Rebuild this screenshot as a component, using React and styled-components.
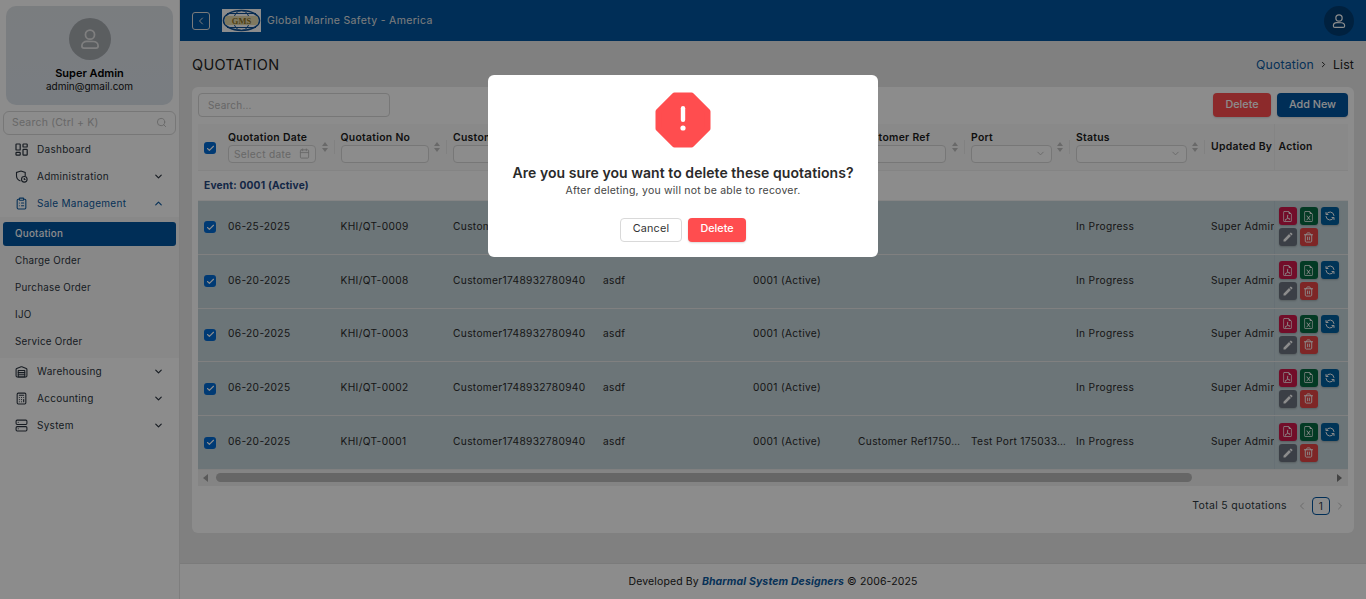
import React from "react";
import styled, { createGlobalStyle } from "styled-components";
import {
  LuChevronLeft,
  LuChevronRight,
  LuChevronDown,
  LuChevronUp,
  LuSearch,
  LuCalendar,
  LuClipboardList,
  LuWarehouse,
  LuCalculator,
  LuServer,
  LuTrash2,
  LuCheck,
} from "react-icons/lu";
import { BsFileEarmarkPdf, BsFileEarmarkExcel } from "react-icons/bs";
import { TbRefresh } from "react-icons/tb";
import { MdEdit } from "react-icons/md";

const font = `Inter, "Noto Sans", "Liberation Sans", sans-serif`;

const GlobalStyle = createGlobalStyle`
  html, body {
    margin: 0;
    padding: 0;
    height: 100%;
    overflow: hidden;
    background: #ffffff;
    font-family: ${font};
    color: #2a2a2a;
  }
  * { box-sizing: border-box; }
`;

const Layout = styled.div`
  display: flex;
  height: 100vh;
`;

const Sidebar = styled.aside`
  width: 180px;
  flex: none;
  background: #fff;
  border-right: 1px solid #e6e6e6;
  padding: 6px 0 0;
`;
const Profile = styled.div`
  margin: 0 6px 0 6px;
  height: 99px;
  border-radius: 10px;
  background: linear-gradient(180deg, #dfe3e8, #dde4ec);
  display: flex;
  flex-direction: column;
  align-items: center;
  padding-top: 12px;
`;
const Avatar = styled.div`
  width: 42px;
  height: 42px;
  border-radius: 50%;
  background: #a6abb0;
  color: #e8e8e8;
  display: flex;
  align-items: center;
  justify-content: center;
`;
const ProfileName = styled.div`
  margin-top: 6px;
  font-size: 11px;
  font-weight: 600;
  line-height: 14px;
  color: #000;
`;
const ProfileMail = styled.div`
  font-size: 10px;
  line-height: 13px;
  color: #111;
`;
const SideSearch = styled.div`
  margin: 6px 3px 0;
  height: 24px;
  border: 1px solid #d9d9d9;
  border-radius: 6px;
  display: flex;
  align-items: center;
  justify-content: space-between;
  padding: 0 8px 1px;
  font-size: 10.5px;
  letter-spacing: 0.2px;
  color: #bdbdbd;
`;
const Menu = styled.nav`
  margin-top: 1px;
`;
const MenuItem = styled.div`
  height: 27px;
  display: flex;
  align-items: center;
  padding: 0 15px 0 15px;
  gap: 9px;
  font-size: 10px;
  letter-spacing: 0.28px;
  color: ${(p) => (p.$open ? "#0d5aa0" : "#2c3540")};
  svg.lead {
    flex: none;
    width: 13px;
    height: 13px;
  }
  span {
    flex: 1;
    padding-bottom: 1px;
  }
`;
const SubMenu = styled.div`
  background: #f8f8f8;
  padding-top: 5px;
  padding-bottom: 2px;
`;
const SubItem = styled.div`
  height: ${(p) => (p.$active ? "24px" : "27px")};
  margin: ${(p) => (p.$active ? "0 3px 1.5px 3px" : "0 3px")};
  padding: 0 0 1px 12px;
  display: flex;
  align-items: center;
  font-size: 9.8px;
  letter-spacing: 0.25px;
  border-radius: 3px;
  color: ${(p) => (p.$active ? "#fff" : "#2c3540")};
  background: ${(p) => (p.$active ? "#00549f" : "transparent")};
  font-weight: ${(p) => (p.$active ? 500 : 400)};
`;

const Main = styled.div`
  flex: 1;
  min-width: 0;
  display: flex;
  flex-direction: column;
  background: #eaeaea;
`;
const Topbar = styled.header`
  height: 41px;
  flex: none;
  background: #00549f;
  display: flex;
  align-items: center;
  padding: 0 12px;
  color: #e4e4e4;
`;
const BackButton = styled.div`
  width: 18px;
  height: 18px;
  border: 1px solid #e0e0e0;
  border-radius: 3px;
  display: flex;
  align-items: center;
  justify-content: center;
  margin-right: 12px;
`;
const Brand = styled.div`
  flex: 1;
  margin-left: 6px;
  font-size: 10.5px;
  letter-spacing: 0.33px;
`;
const TopUser = styled.div`
  width: 30px;
  height: 30px;
  border-radius: 50%;
  background: #003d73;
  display: flex;
  align-items: center;
  justify-content: center;
  color: #fff;
`;

const Content = styled.main`
  flex: 1;
  min-height: 0;
  padding: 0 12px;
`;
const TitleRow = styled.div`
  height: 46px;
  display: flex;
  align-items: center;
  justify-content: space-between;
`;
const PageTitle = styled.h1`
  margin: 0;
  font-size: 14.5px;
  font-weight: 400;
  letter-spacing: 0.3px;
  color: #222;
`;
const Crumbs = styled.div`
  display: flex;
  align-items: center;
  gap: 5px;
  font-size: 12.3px;
  letter-spacing: 0.15px;
  color: #222;
  a {
    color: #0d5aa0;
  }
`;
const Card = styled.section`
  height: 446px;
  background: #fff;
  border-radius: 6px;
  padding: 6px;
  display: flex;
  flex-direction: column;
`;
const Toolbar = styled.div`
  display: flex;
  align-items: center;
  gap: 6px;
  height: 24px;
  margin-bottom: 7px;
`;
const SearchInput = styled.div`
  width: 192px;
  height: 24px;
  border: 1px solid #d9d9d9;
  border-radius: 4px;
  padding: 0 0 1px 9px;
  display: flex;
  align-items: center;
  font-size: 10px;
  letter-spacing: 0.2px;
  color: #bbb;
  margin-right: auto;
`;
const Button = styled.button`
  height: 24px;
  width: ${(p) => p.$w}px;
  border: none;
  border-radius: 4px;
  font-family: ${font};
  font-size: 10.8px;
  font-weight: 500;
  color: #fff;
  background: ${(p) => p.$bg};
  box-shadow: 0 1px 2px rgba(0, 0, 0, 0.15);
  padding: 0 0 2px;
`;

const TableWrap = styled.div`
  width: 1150px;
  overflow: hidden;
`;
const Table = styled.table`
  width: 1150px;
  table-layout: fixed;
  border-collapse: collapse;
`;
const Th = styled.th`
  height: 46.5px;
  background: #fafafa;
  border-bottom: 1px solid #f0f0f0;
  padding: 0 0 0 ${(p) => (p.$sticky ? 4 : 6)}px;
  text-align: left;
  vertical-align: middle;
  font-size: 10.4px;
  letter-spacing: 0.28px;
  font-weight: 600;
  color: #1d1d1d;
  position: ${(p) => (p.$sticky ? "sticky" : "static")};
  right: 0;
  border-left: ${(p) => (p.$sticky ? "1px solid #f0f0f0" : "none")};
  white-space: nowrap;
  overflow: hidden;
`;
const ThInner = styled.div`
  display: flex;
  align-items: center;
  gap: 6px;
  padding-bottom: 1px;
`;
const ThBody = styled.div`
  flex: 1;
  min-width: 0;
`;
const FilterBox = styled.div`
  width: ${(p) => p.$w}px;
  height: 18px;
  margin-top: 1px;
  border: 1px solid #d9d9d9;
  border-radius: 4px;
  background: #fff;
  display: flex;
  align-items: center;
  justify-content: space-between;
  padding: 0 5px;
  font-size: 10.2px;
  letter-spacing: 0.3px;
  font-weight: 400;
  color: #bdbdbd;
`;
const SortIcon = styled.div`
  display: flex;
  flex-direction: column;
  gap: 2px;
  flex: none;
  &::before,
  &::after {
    content: "";
    border-left: 3.5px solid transparent;
    border-right: 3.5px solid transparent;
  }
  &::before {
    border-bottom: 4px solid #bfbfbf;
  }
  &::after {
    border-top: 4px solid #bfbfbf;
  }
`;
const Divider = styled.div`
  width: 1px;
  height: 14px;
  background: #ececec;
  flex: none;
`;
const GroupRow = styled.td`
  height: 30px;
  padding: 0 0 2px 6px;
  background: #fff;
  border-bottom: 1px solid #f0f0f0;
  font-size: 10.2px;
  letter-spacing: 0.2px;
  font-weight: 700;
  color: #26487f;
  white-space: nowrap;
  overflow: visible;
`;
const Td = styled.td`
  height: 53.8px;
  background: #c5d5db;
  border-bottom: 1px solid #eaeaea;
  padding: 0 0 ${(p) => (p.$sticky ? 1 : 3)}px ${(p) => (p.$sticky ? 4 : 6)}px;
  font-size: 10.2px;
  letter-spacing: 0.33px;
  color: #2a2a2a;
  white-space: nowrap;
  overflow: hidden;
  position: ${(p) => (p.$sticky ? "sticky" : "static")};
  border-left: ${(p) => (p.$sticky ? "1px solid #bccdd5" : "none")};
`;
const CheckBox = styled.div`
  width: 12px;
  height: 12px;
  margin-top: ${(p) => p.$mt || 0}px;
  border-radius: 3px;
  background: #006ad4;
  color: #fff;
  display: flex;
  align-items: center;
  justify-content: center;
`;
const Actions = styled.div`
  display: flex;
  flex-wrap: wrap;
  gap: 3px;
  width: 62px;
`;
const ActionBtn = styled.div`
  width: 18px;
  height: 18px;
  border-radius: 3px;
  background: ${(p) => p.$bg};
  color: #fff;
  display: flex;
  align-items: center;
  justify-content: center;
  box-shadow: 0 1px 2px rgba(0, 0, 0, 0.2);
`;
const Scrollbar = styled.div`
  width: 1150px;
  height: 16px;
  background: #f1f1f1;
  display: flex;
  align-items: center;
  padding: 0 6px 0 5px;
  gap: 8px;
  flex: none;
`;
const ScrollThumb = styled.div`
  width: 976px;
  height: 9px;
  border-radius: 5px;
  background: #bbb;
`;
const ScrollTrack = styled.div`
  flex: 1;
`;
const Arrow = styled.div`
  width: 0;
  height: 0;
  border-top: 4.5px solid transparent;
  border-bottom: 4.5px solid transparent;
  ${(p) => (p.$left ? "border-right: 5px solid #a3a3a3;" : "border-left: 5px solid #7a7a7a;")}
`;
const Pagination = styled.div`
  display: flex;
  align-items: center;
  justify-content: flex-end;
  gap: 9px;
  padding: 11px 2px 0 0;
  font-size: 10.5px;
  letter-spacing: 0.33px;
  color: #2b3640;
`;
const PagerArrow = styled.div`
  color: #c4c4c4;
  display: flex;
`;
const PageNum = styled.div`
  width: 18px;
  height: 18px;
  border: 1px solid #00549f;
  border-radius: 4px;
  display: flex;
  align-items: center;
  justify-content: center;
  font-size: 10px;
  margin: 0 -5px;
`;
const Footer = styled.footer`
  height: 36px;
  flex: none;
  background: #fff;
  border-top: 1px solid #e0e0e0;
  display: flex;
  align-items: center;
  justify-content: center;
  font-size: 10.5px;
  letter-spacing: 0.13px;
  color: #1c1c1c;
  i {
    color: #0d5aa0;
    font-weight: 700;
    margin: 0 3px;
  }
`;

const Overlay = styled.div`
  position: fixed;
  inset: 0;
  background: rgba(0, 0, 0, 0.45);
  display: flex;
  justify-content: center;
  align-items: flex-start;
  padding-top: 75px;
`;
const Modal = styled.div`
  width: 390px;
  height: 182px;
  background: #fff;
  border-radius: 6px;
  display: flex;
  flex-direction: column;
  align-items: center;
  padding-top: 17px;
`;
const ModalTitle = styled.div`
  margin-top: 15px;
  font-size: 14px;
  font-weight: 600;
  letter-spacing: 0.06px;
  line-height: 20px;
  color: #2a2a2a;
`;
const ModalText = styled.div`
  font-size: 10.5px;
  letter-spacing: 0.22px;
  line-height: 15px;
  color: #444;
`;
const ModalActions = styled.div`
  display: flex;
  gap: 6px;
  margin-top: 20px;
`;
const CancelBtn = styled.button`
  width: 62px;
  height: 24px;
  background: #fff;
  border: 1px solid #d9d9d9;
  border-radius: 4px;
  font-family: ${font};
  font-size: 10.8px;
  letter-spacing: 0.2px;
  color: #333;
  padding: 0 0 3px;
`;
const ModalDelete = styled(Button)`
  padding-bottom: 3px;
`;

const UserIcon = ({ size = 22 }) => (
  <svg width={size} height={size} viewBox="0 0 24 24" fill="none" stroke="currentColor" strokeWidth="1.6">
    <circle cx="12" cy="8" r="4.2" />
    <path d="M4.5 18.5c0-2.6 2.2-4.2 4.6-4.2h5.8c2.4 0 4.6 1.6 4.6 4.2 0 1.3-.9 2-2 2H6.5c-1.1 0-2-.7-2-2z" />
  </svg>
);

const DashIcon = () => (
  <svg className="lead" viewBox="0 0 13 13" fill="none" stroke="currentColor" strokeWidth="1.2">
    <rect x="1" y="1" width="4.2" height="6" rx="0.6" />
    <rect x="8" y="1" width="4.2" height="3" rx="0.6" />
    <rect x="1" y="9.4" width="4.2" height="2.8" rx="0.6" />
    <rect x="8" y="6.4" width="4.2" height="5.8" rx="0.6" />
  </svg>
);

const AdminIcon = () => (
  <svg className="lead" viewBox="0 0 13 13" fill="none" stroke="currentColor" strokeWidth="1.1">
    <path d="M6 1l4.2 1.4V6M6 1L1.5 2.4v3.4c0 2.8 1.9 4.5 4 5.2" />
    <circle cx="9.3" cy="9.3" r="2.8" />
    <path d="M9.3 8v1.5h1.2" />
  </svg>
);

const GmsLogo = () => (
  <svg width="39" height="23" viewBox="0 0 39 23">
    <rect width="39" height="23" fill="#fff" />
    <ellipse cx="19.5" cy="11.5" rx="18" ry="10" fill="none" stroke="#0b4f94" strokeWidth="1.6" />
    <ellipse cx="19.5" cy="11.5" rx="8" ry="10" fill="none" stroke="#0b4f94" strokeWidth="1" />
    <path d="M5 4.5h29M5 18.5h29" stroke="#0b4f94" strokeWidth="1" />
    <rect x="3" y="7" width="33" height="9" rx="2" fill="#e8dcb0" />
    <text x="19.5" y="14.6" textAnchor="middle" fontFamily="Liberation Serif, serif" fontWeight="700" fontSize="8.5" fill="#8d7322">
      GMS
    </text>
  </svg>
);

const AlertIcon = () => (
  <svg width="56" height="56" viewBox="0 0 56 56">
    <path
      d="M19.5 3.5h17l16 16v17l-16 16h-17l-16-16v-17z"
      fill="#ff4d4f"
      stroke="#ff4d4f"
      strokeWidth="6"
      strokeLinejoin="round"
    />
    <rect x="25.8" y="14" width="4.4" height="16" rx="2.2" fill="#fff" />
    <circle cx="28" cy="36" r="2.6" fill="#fff" />
  </svg>
);

const columns = [
  { w: 24 },
  { w: 112.5, label: "Quotation Date", filter: 88, date: true },
  { w: 112.5, label: "Quotation No", filter: 88 },
  { w: 150, label: "Customer", filter: 130 },
  { w: 150, label: "Vessel", filter: 130 },
  { w: 105, label: "Event", filter: 85 },
  { w: 113, label: "Customer Ref", filter: 88 },
  { w: 105, label: "Port", filter: 81, select: true },
  { w: 135, label: "Status", filter: 111, select: true },
  { w: 69, label: "Updated By", plain: true },
  { w: 74, label: "Action", plain: true, sticky: true },
];

const rows = [
  { date: "06-25-2025", no: "KHI/QT-0009" },
  { date: "06-20-2025", no: "KHI/QT-0008" },
  { date: "06-20-2025", no: "KHI/QT-0003" },
  { date: "06-20-2025", no: "KHI/QT-0002" },
  {
    date: "06-20-2025",
    no: "KHI/QT-0001",
    ref: "Customer Ref1750…",
    port: "Test Port 175033…",
  },
];

const sideTop = [
  { label: "Dashboard", icon: <DashIcon />, chevron: false },
  { label: "Administration", icon: <AdminIcon />, chevron: true },
];
const sideBottom = [
  { label: "Warehousing", icon: <LuWarehouse className="lead" /> },
  { label: "Accounting", icon: <LuCalculator className="lead" /> },
  { label: "System", icon: <LuServer className="lead" /> },
];
const subItems = ["Charge Order", "Purchase Order", "IJO", "Service Order"];

export default function App() {
  return (
    <>
      <GlobalStyle />
      <Layout>
        <Sidebar>
          <Profile>
            <Avatar>
              <UserIcon size={26} />
            </Avatar>
            <ProfileName>Super Admin</ProfileName>
            <ProfileMail>admin@gmail.com</ProfileMail>
          </Profile>
          <SideSearch>
            Search (Ctrl + K)
            <LuSearch size={11} />
          </SideSearch>
          <Menu>
            {sideTop.map((m) => (
              <MenuItem key={m.label}>
                {m.icon}
                <span>{m.label}</span>
                {m.chevron && <LuChevronDown size={11} strokeWidth={2.6} />}
              </MenuItem>
            ))}
            <MenuItem $open>
              <LuClipboardList className="lead" />
              <span>Sale Management</span>
              <LuChevronUp size={11} strokeWidth={2.6} />
            </MenuItem>
            <SubMenu>
              <SubItem $active>Quotation</SubItem>
              {subItems.map((s) => (
                <SubItem key={s}>{s}</SubItem>
              ))}
            </SubMenu>
            {sideBottom.map((m) => (
              <MenuItem key={m.label}>
                {m.icon}
                <span>{m.label}</span>
                <LuChevronDown size={11} strokeWidth={2.6} />
              </MenuItem>
            ))}
          </Menu>
        </Sidebar>
        <Main>
          <Topbar>
            <BackButton>
              <LuChevronLeft size={12} />
            </BackButton>
            <GmsLogo />
            <Brand>Global Marine Safety - America</Brand>
            <TopUser>
              <UserIcon size={18} />
            </TopUser>
          </Topbar>
          <Content>
            <TitleRow>
              <PageTitle>QUOTATION</PageTitle>
              <Crumbs>
                <a>Quotation</a>
                <LuChevronRight size={9} strokeWidth={2.6} />
                List
              </Crumbs>
            </TitleRow>
            <Card>
              <Toolbar>
                <SearchInput>Search...</SearchInput>
                <Button $w={58} $bg="#ff4d4f">Delete</Button>
                <Button $w={71} $bg="#00549f">Add New</Button>
              </Toolbar>
              <TableWrap>
                <Table>
                  <colgroup>
                    {columns.map((c, i) => (
                      <col key={i} style={{ width: c.w }} />
                    ))}
                  </colgroup>
                  <thead>
                    <tr>
                      {columns.map((c, i) => (
                        <Th key={i} $sticky={c.sticky}>
                          {i === 0 ? (
                            <CheckBox $mt={2}>
                              <LuCheck size={9} strokeWidth={3} />
                            </CheckBox>
                          ) : (
                            <ThInner>
                              <ThBody>
                                {c.label}
                                {c.filter && (
                                  <FilterBox $w={c.filter}>
                                    {c.date && "Select date"}
                                    {c.date && <LuCalendar size={11} />}
                                    {c.select && <span />}
                                    {c.select && <LuChevronDown size={11} />}
                                  </FilterBox>
                                )}
                              </ThBody>
                              {!c.plain && <SortIcon />}
                              {!c.plain && <Divider />}
                            </ThInner>
                          )}
                        </Th>
                      ))}
                    </tr>
                  </thead>
                  <tbody>
                    <tr>
                      <GroupRow colSpan={11}>Event: 0001 (Active)</GroupRow>
                    </tr>
                    {rows.map((r) => (
                      <tr key={r.no}>
                        <Td>
                          <CheckBox $mt={3}>
                            <LuCheck size={9} strokeWidth={3} />
                          </CheckBox>
                        </Td>
                        <Td>{r.date}</Td>
                        <Td>{r.no}</Td>
                        <Td>Customer1748932780940</Td>
                        <Td>asdf</Td>
                        <Td>0001 (Active)</Td>
                        <Td>{r.ref}</Td>
                        <Td>{r.port}</Td>
                        <Td>In Progress</Td>
                        <Td>Super Admin</Td>
                        <Td $sticky>
                          <Actions>
                            <ActionBtn $bg="#d0184b">
                              <BsFileEarmarkPdf size={11} />
                            </ActionBtn>
                            <ActionBtn $bg="#066a43">
                              <BsFileEarmarkExcel size={11} />
                            </ActionBtn>
                            <ActionBtn $bg="#00609f">
                              <TbRefresh size={12} />
                            </ActionBtn>
                            <ActionBtn $bg="#6c7480">
                              <MdEdit size={12} />
                            </ActionBtn>
                            <ActionBtn $bg="#e64545">
                              <LuTrash2 size={11} />
                            </ActionBtn>
                          </Actions>
                        </Td>
                      </tr>
                    ))}
                  </tbody>
                </Table>
              </TableWrap>
              <Scrollbar>
                <Arrow $left />
                <ScrollThumb />
                <ScrollTrack />
                <Arrow />
              </Scrollbar>
              <Pagination>
                Total 5 quotations
                <PagerArrow>
                  <LuChevronLeft size={12} />
                </PagerArrow>
                <PageNum>1</PageNum>
                <PagerArrow>
                  <LuChevronRight size={12} />
                </PagerArrow>
              </Pagination>
            </Card>
          </Content>
          <Footer>
            Developed By <i>Bharmal System Designers</i> © 2006-2025
          </Footer>
        </Main>
      </Layout>
      <Overlay>
        <Modal>
          <AlertIcon />
          <ModalTitle>Are you sure you want to delete these quotations?</ModalTitle>
          <ModalText>After deleting, you will not be able to recover.</ModalText>
          <ModalActions>
            <CancelBtn>Cancel</CancelBtn>
            <ModalDelete $w={58} $bg="#ff4d4f">Delete</ModalDelete>
          </ModalActions>
        </Modal>
      </Overlay>
    </>
  );
}
